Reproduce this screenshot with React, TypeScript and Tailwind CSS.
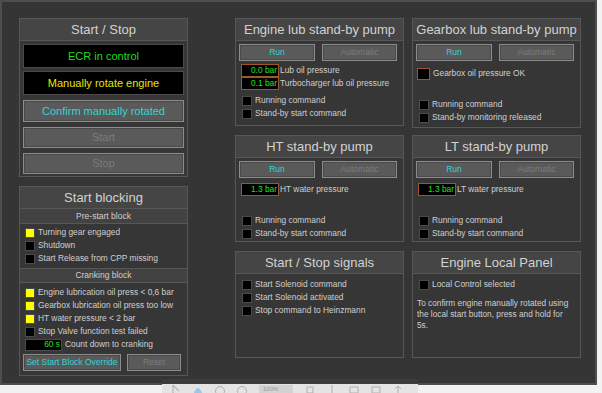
import React from 'react';

const font = { fontFamily: '"Liberation Sans", Arial, sans-serif' };

function Panel({ title, className, children }: { title: string; className: string; children?: React.ReactNode }) {
  return (
    <div className={`flex flex-col border border-[#575757] bg-[#363636] ${className}`}>
      <div className="h-[22px] shrink-0 flex items-center justify-center bg-[#454545] border-b border-[#575757] text-[13px] text-[#d2d2d2]">
        {title}
      </div>
      {children}
    </div>
  );
}

function Box({ on, warn }: { on?: boolean; warn?: boolean }) {
  if (warn) {
    return <span className="w-[13px] h-[12px] shrink-0 border border-[#a0552e] bg-black" />;
  }
  return <span className={`w-[10px] h-[10px] shrink-0 border border-[#4a4a4a] ${on ? 'bg-[#ffff00]' : 'bg-black'}`} />;
}

function Row({ label, on, warn }: { label: string; on?: boolean; warn?: boolean }) {
  return (
    <div className="h-[13px] flex items-center gap-[3px] text-[8.4px] text-[#cfcfcf] whitespace-nowrap">
      <Box on={on} warn={warn} />
      <span>{label}</span>
    </div>
  );
}

function Btn({ label, active, className }: { label: string; active?: boolean; className: string }) {
  return (
    <div
      className={`flex items-center justify-center bg-[#5a5a5a] border border-[#8c8c8c] shadow-[inset_0_0_0_1px_#4a4a4a] whitespace-nowrap ${
        active ? 'text-[#2fd6d6]' : 'text-[#7c7c7c]'
      } ${className}`}
    >
      {label}
    </div>
  );
}

function Value({ value, label }: { value: string; label: string }) {
  return (
    <div className="h-[13px] flex items-center text-[8.4px] whitespace-nowrap">
      <span className="w-[38px] h-full flex items-center justify-end pr-[1px] border border-[#a0552e] bg-black text-[#22e022]">
        {value}
      </span>
      <span className="ml-[1px] text-[#cfcfcf]">{label}</span>
    </div>
  );
}

function PumpButtons() {
  return (
    <div className="flex gap-[7px] mt-[3px] px-[3px]">
      <Btn label="Run" active className="w-[76px] h-[17px] text-[8.5px]" />
      <Btn label="Automatic" className="w-[75px] h-[17px] text-[8.5px]" />
    </div>
  );
}

export default function App() {
  return (
    <div className="relative w-[602px] h-[393px] bg-[#f2f2f2] overflow-hidden" style={font}>
      <div className="w-[597px] h-[385px] bg-[#353535] border-2 border-[#4e4e4e] flex pt-[16px] pl-[17px]">
        {/* left column */}
        <div className="w-[169px] flex flex-col">
          <Panel title="Start / Stop" className="h-[159px]">
            <div className="flex flex-col px-[3px] pt-[3px]">
              <div className="h-[24px] flex items-center justify-center bg-black border border-[#4a4a4a] text-[11px] text-[#1fdc1f]">
                ECR in control
              </div>
              <div className="h-[24px] mt-[3px] flex items-center justify-center bg-black border border-[#4a4a4a] text-[11px] text-[#e6e600]">
                Manually rotate engine
              </div>
              <Btn label="Confirm manually rotated" active className="h-[22px] mt-[5px] text-[11px]" />
              <Btn label="Start" className="h-[21px] mt-[5px] text-[11px]" />
              <Btn label="Stop" className="h-[21px] mt-[5px] text-[11px]" />
            </div>
          </Panel>

          <Panel title="Start blocking" className="h-[190px] mt-[9px]">
            <div className="h-[15px] flex items-center justify-center bg-[#424242] border-b border-[#575757] text-[8.5px] text-[#cfcfcf]">
              Pre-start block
            </div>
            <div className="flex flex-col pl-[5px] pt-[2px]">
              <Row label="Turning gear engaged" on />
              <Row label="Shutdown" />
              <Row label="Start Release from CPP missing" />
            </div>
            <div className="h-[15px] mt-[3px] flex items-center justify-center bg-[#424242] border-y border-[#575757] text-[8.5px] text-[#cfcfcf]">
              Cranking block
            </div>
            <div className="flex flex-col pl-[5px] pt-[3px]">
              <Row label="Engine lubrication oil press < 0,6 bar" on />
              <Row label="Gearbox lubrication oil press too low" on />
              <Row label="HT water pressure < 2 bar" on />
              <Row label="Stop Valve function test failed" />
              <div className="h-[13px] flex items-center gap-[3px] text-[8.4px] whitespace-nowrap">
                <span className="w-[37px] h-[12px] flex items-center justify-end pr-[1px] bg-black border border-[#4a4a4a] text-[#22e022]">
                  60 s
                </span>
                <span className="text-[#cfcfcf]">Count down to cranking</span>
              </div>
            </div>
            <div className="flex gap-[6px] px-[3px] mt-[3px]">
              <Btn label="Set Start Block Override" active className="w-[98px] h-[17px] text-[8.5px]" />
              <Btn label="Reset" className="w-[54px] h-[17px] text-[8.5px]" />
            </div>
          </Panel>
        </div>

        {/* middle column */}
        <div className="w-[169px] ml-[47px] flex flex-col">
          <Panel title="Engine lub stand-by pump" className="h-[108px]">
            <PumpButtons />
            <div className="flex flex-col mt-[3px] pl-[5px]">
              <Value value="0.0 bar" label="Lub oil pressure" />
              <Value value="0.1 bar" label="Turbocharger lub oil pressure" />
            </div>
            <div className="flex flex-col mt-[4px] pl-[6px]">
              <Row label="Running command" />
              <Row label="Stand-by start command" />
            </div>
          </Panel>

          <Panel title="HT stand-by pump" className="h-[107px] mt-[9px]">
            <PumpButtons />
            <div className="flex flex-col mt-[5px] pl-[5px]">
              <Value value="1.3 bar" label="HT water pressure" />
            </div>
            <div className="flex flex-col mt-[18px] pl-[6px]">
              <Row label="Running command" />
              <Row label="Stand-by start command" />
            </div>
          </Panel>

          <Panel title="Start / Stop signals" className="h-[107px] mt-[9px]">
            <div className="flex flex-col mt-[4px] pl-[6px]">
              <Row label="Start Solenoid command" />
              <Row label="Start Solenoid activated" />
              <Row label="Stop command to Heinzmann" />
            </div>
          </Panel>
        </div>

        {/* right column */}
        <div className="w-[169px] ml-[8px] flex flex-col">
          <Panel title="Gearbox lub stand-by pump" className="h-[110px]">
            <PumpButtons />
            <div className="flex flex-col mt-[6px] pl-[4px]">
              <Row label="Gearbox oil pressure OK" warn />
            </div>
            <div className="flex flex-col mt-[18px] pl-[6px]">
              <Row label="Running command" />
              <Row label="Stand-by monitoring released" />
            </div>
          </Panel>

          <Panel title="LT stand-by pump" className="h-[107px] mt-[7px]">
            <PumpButtons />
            <div className="flex flex-col mt-[5px] pl-[5px]">
              <Value value="1.3 bar" label="LT water pressure" />
            </div>
            <div className="flex flex-col mt-[18px] pl-[6px]">
              <Row label="Running command" />
              <Row label="Stand-by start command" />
            </div>
          </Panel>

          <Panel title="Engine Local Panel" className="h-[107px] mt-[9px]">
            <div className="flex flex-col mt-[4px] pl-[6px]">
              <Row label="Local Control selected" />
            </div>
            <p className="mt-[7px] px-[4px] text-[8.3px] leading-[11px] text-[#cfcfcf]">
              To confirm engine manually rotated using
              <br />
              the local start button, press and hold for
              <br />
              5s.
            </p>
          </Panel>
        </div>
      </div>

      {/* viewer toolbar peeking in at the bottom */}
      <div className="absolute left-[162px] top-[379px] w-[256px] h-[14px] flex flex-col">
        <div className="h-[6px] bg-[#3c3c3c]" />
        <div className="flex-1 bg-[#e4e4e4] flex items-start gap-[12px] pl-[9px] pt-[1px]">
          <svg width="10" height="8" viewBox="0 0 10 8"><path d="M2 8 L2 0 L8 6" fill="none" stroke="#b5b5b5" strokeWidth="1.2" /></svg>
          <svg width="10" height="8" viewBox="0 0 10 8"><path d="M1 8 Q5 -2 9 8 Z" fill="#9cc6e8" /></svg>
          <svg width="10" height="8" viewBox="0 0 10 8"><circle cx="5" cy="6" r="4.5" fill="none" stroke="#b0b0b0" /></svg>
          <svg width="10" height="8" viewBox="0 0 10 8"><circle cx="5" cy="6" r="4.5" fill="none" stroke="#b0b0b0" /></svg>
          <div className="w-[34px] h-[8px] bg-[#d2d2d2] text-[6px] leading-[8px] text-[#9a9a9a] pl-[4px]">100%</div>
          <svg width="10" height="8" viewBox="0 0 10 8"><rect x="2" y="2" width="6" height="6" fill="none" stroke="#b0b0b0" /></svg>
          <svg width="10" height="8" viewBox="0 0 10 8"><path d="M5 0 V8" stroke="#b0b0b0" /></svg>
          <svg width="10" height="8" viewBox="0 0 10 8"><rect x="1" y="2" width="8" height="6" fill="none" stroke="#b0b0b0" /></svg>
          <svg width="10" height="8" viewBox="0 0 10 8"><rect x="1" y="2" width="8" height="6" fill="none" stroke="#b0b0b0" /></svg>
          <svg width="10" height="8" viewBox="0 0 10 8"><path d="M5 1 V8 M2 4 L5 1 L8 4" fill="none" stroke="#b0b0b0" /></svg>
        </div>
      </div>
    </div>
  );
}
